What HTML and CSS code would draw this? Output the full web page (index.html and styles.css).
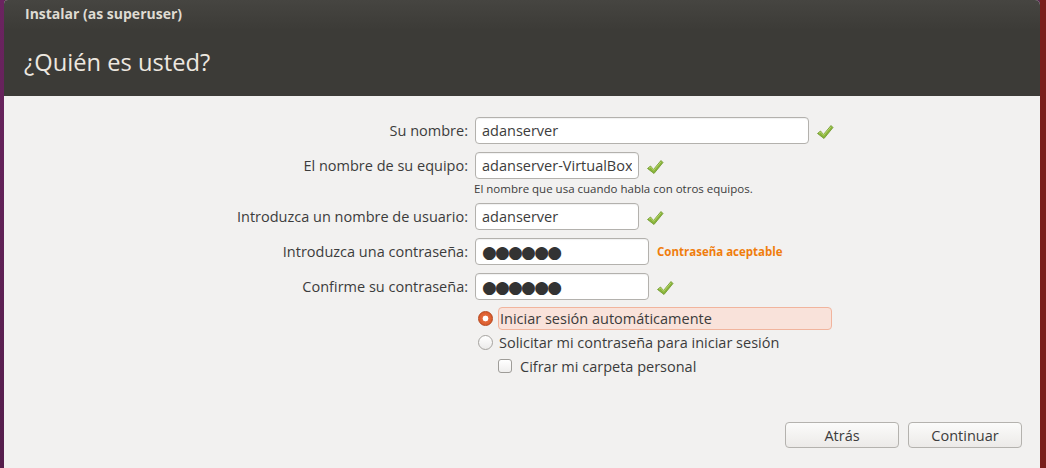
FILE: index.html
```html
<!DOCTYPE html>
<html lang="es">
<head>
<meta charset="utf-8">
<title>Instalar</title>
<link rel="stylesheet" href="styles.css">
</head>
<body>
<div class="desk-left"></div>
<div class="window">
  <header class="head">
    <div class="wtitle">Instalar (as superuser)</div>
    <h1 class="page-title">¿Quién es usted?</h1>
  </header>
  <main class="content">
    <div class="form">
      <div class="row">
        <label class="lbl">Su nombre:</label>
        <input class="field f-wide" value="adanserver" readonly>
        <svg class="ok" viewBox="0 0 18 16"><path d="M1.5 9.5 L4.5 7 L7.5 10.5 L15 1.5 L17 3.5 L8 14.5 Z" fill="#8ab53b" stroke="#6c9628" stroke-width="0.8" stroke-linejoin="round"/><path d="M3 9.3 L4.6 8 L7.6 11.3 L15 2.7" fill="none" stroke="#c3e07a" stroke-width="0.8"/></svg>
      </div>
      <div class="row">
        <label class="lbl">El nombre de su equipo:</label>
        <input class="field f-mid" value="adanserver-VirtualBox" readonly>
        <svg class="ok" viewBox="0 0 18 16"><path d="M1.5 9.5 L4.5 7 L7.5 10.5 L15 1.5 L17 3.5 L8 14.5 Z" fill="#8ab53b" stroke="#6c9628" stroke-width="0.8" stroke-linejoin="round"/><path d="M3 9.3 L4.6 8 L7.6 11.3 L15 2.7" fill="none" stroke="#c3e07a" stroke-width="0.8"/></svg>
      </div>
      <div class="hint">El nombre que usa cuando habla con otros equipos.</div>
      <div class="row">
        <label class="lbl">Introduzca un nombre de usuario:</label>
        <input class="field f-mid" value="adanserver" readonly>
        <svg class="ok" viewBox="0 0 18 16"><path d="M1.5 9.5 L4.5 7 L7.5 10.5 L15 1.5 L17 3.5 L8 14.5 Z" fill="#8ab53b" stroke="#6c9628" stroke-width="0.8" stroke-linejoin="round"/><path d="M3 9.3 L4.6 8 L7.6 11.3 L15 2.7" fill="none" stroke="#c3e07a" stroke-width="0.8"/></svg>
      </div>
      <div class="row">
        <label class="lbl">Introduzca una contraseña:</label>
        <div class="field f-pw"><span class="dots">●●●●●●</span></div>
        <span class="strength">Contraseña aceptable</span>
      </div>
      <div class="row">
        <label class="lbl">Confirme su contraseña:</label>
        <div class="field f-pw"><span class="dots">●●●●●●</span></div>
        <svg class="ok" viewBox="0 0 18 16"><path d="M1.5 9.5 L4.5 7 L7.5 10.5 L15 1.5 L17 3.5 L8 14.5 Z" fill="#8ab53b" stroke="#6c9628" stroke-width="0.8" stroke-linejoin="round"/><path d="M3 9.3 L4.6 8 L7.6 11.3 L15 2.7" fill="none" stroke="#c3e07a" stroke-width="0.8"/></svg>
      </div>
      <div class="options">
        <div class="opt">
          <span class="radio on"></span>
          <span class="opt-text focus">Iniciar sesión automáticamente</span>
        </div>
        <div class="opt">
          <span class="radio"></span>
          <span class="opt-text">Solicitar mi contraseña para iniciar sesión</span>
        </div>
        <div class="opt sub">
          <span class="check"></span>
          <span class="opt-text">Cifrar mi carpeta personal</span>
        </div>
      </div>
    </div>
    <div class="buttons">
      <button class="btn">Atrás</button>
      <button class="btn">Continuar</button>
    </div>
  </main>
</div>
<div class="desk-right"></div>
</body>
</html>
```

FILE: styles.css
```css
html, body {
  margin: 0;
  height: 100%;
}
body {
  display: flex;
  background: #5a2a50;
  font-family: "Open Sans", "DejaVu Sans", sans-serif;
  overflow: hidden;
}
.desk-left {
  width: 4px;
  background: linear-gradient(#6b2460, #551e4c);
}
.desk-right {
  width: 6px;
  background: #7a1f1c;
}
.window {
  flex: 1;
  display: flex;
  flex-direction: column;
  background: #f2f1f0;
  border-top-left-radius: 4px;
  border-top-right-radius: 5px;
  overflow: hidden;
}
.head {
  height: 96px;
  box-sizing: border-box;
  background: linear-gradient(#464541 0px, #3c3b37 30px, #3c3b37 100%);
  padding: 4px 0 0 21px;
}
.wtitle {
  color: #dfdbd2;
  font-weight: bold;
  font-size: 14px;
  line-height: 20px;
}
.page-title {
  margin: 23px 0 0 -1px;
  color: #ede8e0;
  font-weight: normal;
  font-size: 23.7px;
  line-height: 30px;
}
.content {
  flex: 1;
  display: flex;
  flex-direction: column;
  padding-top: 21px;
}
.form {
  display: flex;
  flex-direction: column;
}
.row {
  display: flex;
  align-items: center;
  gap: 7px;
  height: 27px;
  margin-bottom: 8px;
}
.lbl {
  width: 464px;
  text-align: right;
  font-size: 14.5px;
  color: #3c3c3c;
}
.field {
  box-sizing: border-box;
  height: 27px;
  border: 1px solid #b3b1ad;
  border-radius: 4px;
  background: #fff;
  padding: 0 6px;
  font-family: inherit;
  font-size: 14.5px;
  color: #3c3c3c;
  outline: none;
  box-shadow: inset 0 1px 1px rgba(0,0,0,0.06);
  display: flex;
  align-items: center;
}
.f-wide { width: 334px; }
.f-mid { width: 164px; }
.f-pw { width: 174px; }
.dots {
  font-size: 17px;
  letter-spacing: -1.8px;
  color: #333;
  line-height: 1;
}
.ok {
  width: 18px;
  height: 16px;
  margin-top: 3px;
}
.strength {
  color: #f07d0c;
  font-weight: bold;
  font-size: 11.5px;
  margin-left: 1px;
}
.hint {
  margin: -6px 0 0 470px;
  height: 22px;
  font-size: 11.5px;
  color: #3c3c3c;
}
.options {
  display: flex;
  flex-direction: column;
  padding-left: 474px;
  margin-top: -2px;
}
.opt {
  display: flex;
  align-items: center;
  height: 24px;
  gap: 5px;
  font-size: 14.5px;
  color: #3c3c3c;
}
.opt.sub {
  padding-left: 20px;
  gap: 7px;
}
.radio {
  box-sizing: border-box;
  width: 15px;
  height: 15px;
  border-radius: 50%;
  border: 1px solid #a5a39f;
  background: linear-gradient(#ffffff, #ecebea);
}
.radio.on {
  border-color: #b5451b;
  background: radial-gradient(circle at 50% 50%, #ffffff 0 2.6px, #e36a3c 3.2px, #d45020 100%);
}
.opt-text {
  padding: 1px 1px;
}
.opt-text.focus {
  width: 334px;
  box-sizing: border-box;
  background: #f9e2da;
  border: 1px solid #f1b49d;
  border-radius: 4px;
  padding: 1px 1px;
}
.check {
  box-sizing: border-box;
  width: 14px;
  height: 14px;
  border: 1px solid #9e9c98;
  border-radius: 3px;
  background: linear-gradient(#ffffff, #efeeed);
}
.buttons {
  margin-top: auto;
  display: flex;
  justify-content: flex-end;
  gap: 9px;
  padding: 0 18px 20px 0;
}
.btn {
  width: 114px;
  height: 26px;
  border: 1px solid #b4b2ae;
  border-radius: 4px;
  background: linear-gradient(#fbfbfa, #eceae8);
  font-family: inherit;
  font-size: 14.5px;
  color: #3c3c3c;
  padding: 0;
}
```
